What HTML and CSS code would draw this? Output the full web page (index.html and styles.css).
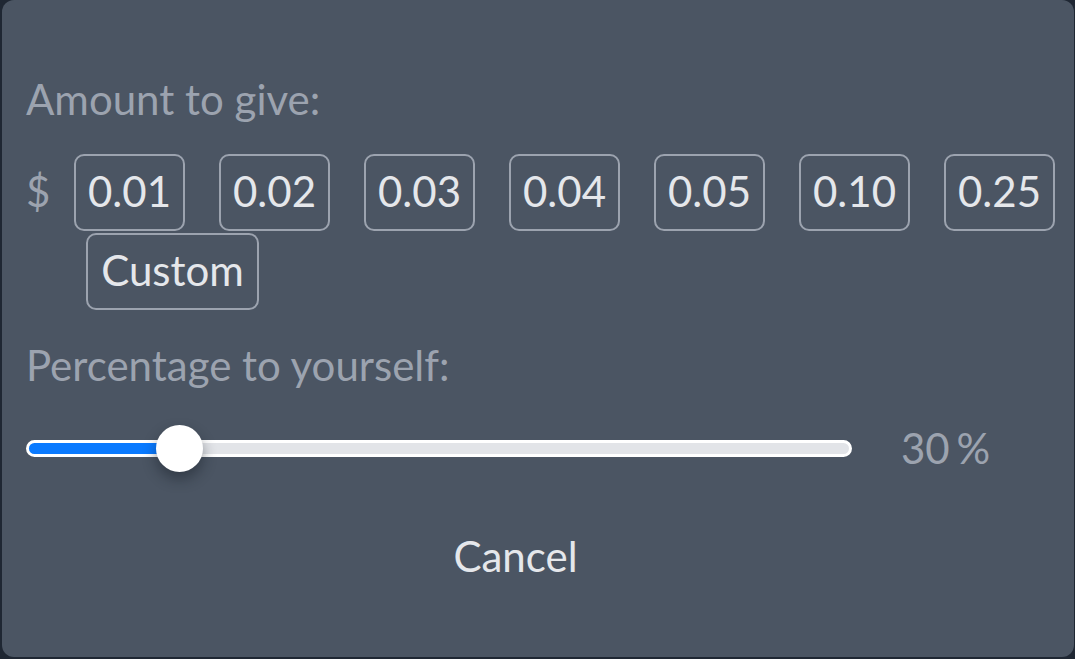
FILE: index.html
```html
<!DOCTYPE html>
<html lang="en">
<head>
<meta charset="utf-8">
<title>Tip</title>
<link rel="stylesheet" href="styles.css">
</head>
<body>
<div class="screen">
  <div class="dialog">
    <div class="label">Amount to give:</div>
    <div class="amounts">
      <span class="currency">$</span>
      <div class="options">
        <button class="opt">0.01</button>
        <button class="opt">0.02</button>
        <button class="opt">0.03</button>
        <button class="opt">0.04</button>
        <button class="opt">0.05</button>
        <button class="opt">0.10</button>
        <button class="opt">0.25</button>
        <button class="opt custom">Custom</button>
      </div>
    </div>
    <div class="label label-pct">Percentage to yourself:</div>
    <div class="slider-row">
      <div class="track">
        <div class="fill" style="width:145px"></div>
        <div class="thumb" style="left:127px"></div>
      </div>
      <div class="pct">30 %</div>
    </div>
    <div class="actions">
      <button class="cancel">Cancel</button>
    </div>
  </div>
</div>
</body>
</html>
```
FILE: styles.css
```css
html, body {
  margin: 0;
  padding: 0;
  background: #1f2733;
  overflow: hidden;
  height: 659px;
}
body {
  font-family: Lato, "Noto Sans", sans-serif;
  font-size: 42px;
  line-height: 50px;
}
.screen {
  padding-left: 2px;
}
.dialog {
  box-sizing: border-box;
  width: 1072px;
  height: 657px;
  background: #4b5563;
  border-radius: 12px;
  padding: 74px 0 0 24px;
}
.label {
  color: #9ca3af;
}
.amounts {
  display: flex;
  align-items: flex-start;
  margin-top: 30px;
}
.currency {
  color: #9ca3af;
  width: 48px;
  padding-top: 12px;
  line-height: 50px;
}
.options {
  display: flex;
  flex-wrap: wrap;
  column-gap: 34px;
  row-gap: 2px;
  width: 990px;
}
.opt {
  box-sizing: border-box;
  height: 77px;
  min-width: 111px;
  padding: 10px 12px 13px;
  border: 2px solid #9ca3af;
  border-radius: 10px;
  background: transparent;
  color: #e5e7eb;
  font-family: inherit;
  font-size: 42px;
  line-height: 50px;
  text-align: center;
}
.custom {
  margin-left: 12px;
  width: 173px;
}
.label-pct {
  margin-top: 30px;
}
.slider-row {
  display: flex;
  align-items: center;
  margin-top: 33px;
  height: 50px;
}
.track {
  position: relative;
  box-sizing: border-box;
  width: 826px;
  height: 17px;
  border: 3px solid #ffffff;
  border-radius: 9px;
  background: #e2e4e8;
}
.fill {
  height: 11px;
  border-radius: 6px 0 0 6px;
  background: #0a7aff;
}
.thumb {
  position: absolute;
  top: -18px;
  width: 47px;
  height: 47px;
  border-radius: 50%;
  background: #ffffff;
  box-shadow: 0 7px 14px rgba(20, 26, 36, 0.45);
}
.pct {
  margin-left: 49px;
  color: #9ca3af;
  word-spacing: -4px;
}
.actions {
  display: flex;
  justify-content: center;
  padding-right: 69px;
  margin-top: 58px;
}
.cancel {
  background: transparent;
  border: none;
  padding: 0;
  color: #e5e7eb;
  font-family: inherit;
  font-size: 42px;
  line-height: 50px;
}
```
